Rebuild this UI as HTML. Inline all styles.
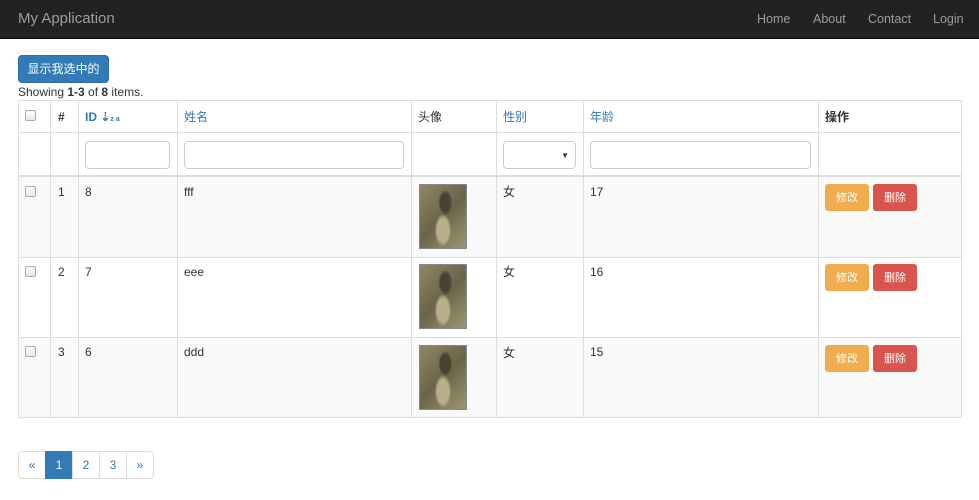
<!DOCTYPE html>
<html><head><meta charset="utf-8"><style>
*{box-sizing:border-box;margin:0;padding:0}
body{width:979px;height:500px;overflow:hidden;background:#fff;font-family:"Liberation Sans","Noto Sans CJK SC",sans-serif;font-size:12px;line-height:14px;color:#333;position:relative}
.a{position:absolute}
.nav{left:0;top:0;width:979px;height:39px;background:#222;border-bottom:1px solid #080808}
.nav span{position:absolute;color:#9d9d9d;font-size:12.5px;top:12px}
.v{position:absolute;background:#ddd;width:1px}
.h{position:absolute;background:#ddd;height:1px;left:18px;width:944px}
.cb{position:absolute;width:11px;height:11px;border:1px solid #aaa;border-radius:2px;background:linear-gradient(#fff,#e6e6e6)}
.t{position:absolute;line-height:14px}
.lnk{color:#337ab7}
.inp{position:absolute;height:28px;border:1px solid #ccc;border-radius:4px;background:#fff}
.img{position:absolute;width:48px;height:65px;border:1px solid #888;background:radial-gradient(ellipse at 55% 28%,#4a4333 0 14%,transparent 20%),radial-gradient(ellipse at 50% 72%,#b9b08a 0 18%,transparent 26%),linear-gradient(135deg,#8f8866,#6a6448 50%,#9e9674)}
.btn{position:absolute;height:27px;border-radius:3px;color:#fff;font-size:11px;text-align:center;line-height:29px}
.pg{position:absolute;top:451px;height:28px;width:28px;border:1px solid #ddd;color:#337ab7;text-align:center;line-height:26px;margin-left:-1px}
</style></head><body>
<div class="a nav"><span style="left:18px;font-size:15px;top:11px;line-height:16px">My Application</span><span style="left:757px">Home</span><span style="left:813px">About</span><span style="left:868px">Contact</span><span style="left:933px">Login</span></div>
<div class="a" style="left:18px;top:55px;width:91px;height:28px;background:#337ab7;border:1px solid #2e6da4;border-radius:4px;color:#fff;text-align:center;line-height:27px">显示我选中的</div>
<div class="t" style="left:18px;top:85px">Showing <b>1-3</b> of <b>8</b> items.</div>
<div class="a" style="left:19px;top:177px;width:942px;height:80px;background:#f9f9f9"></div>
<div class="a" style="left:19px;top:337px;width:942px;height:80px;background:#f9f9f9"></div>
<div class="h" style="top:100px"></div><div class="h" style="top:132px"></div><div class="h" style="top:175px"></div><div class="h" style="top:176px"></div><div class="h" style="top:257px"></div><div class="h" style="top:337px"></div><div class="h" style="top:417px"></div>
<div class="v" style="left:18px;top:100px;height:318px"></div><div class="v" style="left:50px;top:100px;height:318px"></div><div class="v" style="left:78px;top:100px;height:318px"></div><div class="v" style="left:177px;top:100px;height:318px"></div><div class="v" style="left:411px;top:100px;height:318px"></div><div class="v" style="left:496px;top:100px;height:318px"></div><div class="v" style="left:583px;top:100px;height:318px"></div><div class="v" style="left:818px;top:100px;height:318px"></div><div class="v" style="left:961px;top:100px;height:318px"></div>
<div class="cb" style="left:25px;top:110px"></div>
<div class="t" style="left:58px;top:110px;font-weight:bold">#</div>
<div class="t lnk" style="left:85px;top:110px;font-weight:bold">ID ⇣<span style="font-size:7px">z a</span></div>
<div class="t lnk" style="left:184px;top:110px">姓名</div>
<div class="t" style="left:418px;top:110px">头像</div>
<div class="t lnk" style="left:503px;top:110px">性别</div>
<div class="t lnk" style="left:590px;top:110px">年龄</div>
<div class="t" style="left:825px;top:110px;font-weight:bold">操作</div>
<div class="inp" style="left:85px;top:141px;width:85px"></div>
<div class="inp" style="left:184px;top:141px;width:220px"></div>
<div class="inp" style="left:503px;top:141px;width:73px"><span style="position:absolute;right:6px;top:7px;font-size:8px">▼</span></div>
<div class="inp" style="left:590px;top:141px;width:221px"></div>

<div class="cb" style="left:25px;top:186px"></div><div class="t" style="left:58px;top:185px">1</div><div class="t" style="left:85px;top:185px">8</div><div class="t" style="left:184px;top:185px">fff</div><div class="img" style="left:419px;top:184px"></div><div class="t" style="left:503px;top:185px">女</div><div class="t" style="left:590px;top:185px">17</div>
<div class="btn" style="left:825px;top:184px;width:44px;background:#f0ad4e">修改</div><div class="btn" style="left:873px;top:184px;width:44px;background:#d9534f">删除</div>

<div class="cb" style="left:25px;top:266px"></div><div class="t" style="left:58px;top:265px">2</div><div class="t" style="left:85px;top:265px">7</div><div class="t" style="left:184px;top:265px">eee</div><div class="img" style="left:419px;top:264px"></div><div class="t" style="left:503px;top:265px">女</div><div class="t" style="left:590px;top:265px">16</div>
<div class="btn" style="left:825px;top:264px;width:44px;background:#f0ad4e">修改</div><div class="btn" style="left:873px;top:264px;width:44px;background:#d9534f">删除</div>

<div class="cb" style="left:25px;top:346px"></div><div class="t" style="left:58px;top:345px">3</div><div class="t" style="left:85px;top:345px">6</div><div class="t" style="left:184px;top:345px">ddd</div><div class="img" style="left:419px;top:345px"></div><div class="t" style="left:503px;top:346px">女</div><div class="t" style="left:590px;top:345px">15</div>
<div class="btn" style="left:825px;top:345px;width:44px;background:#f0ad4e">修改</div><div class="btn" style="left:873px;top:345px;width:44px;background:#d9534f">删除</div>

<div class="pg" style="left:19px;border-radius:4px 0 0 4px">«</div>
<div class="pg" style="left:46px;background:#337ab7;border-color:#337ab7;color:#fff">1</div>
<div class="pg" style="left:73px">2</div>
<div class="pg" style="left:100px">3</div>
<div class="pg" style="left:127px;border-radius:0 4px 4px 0">»</div>
</body></html>
